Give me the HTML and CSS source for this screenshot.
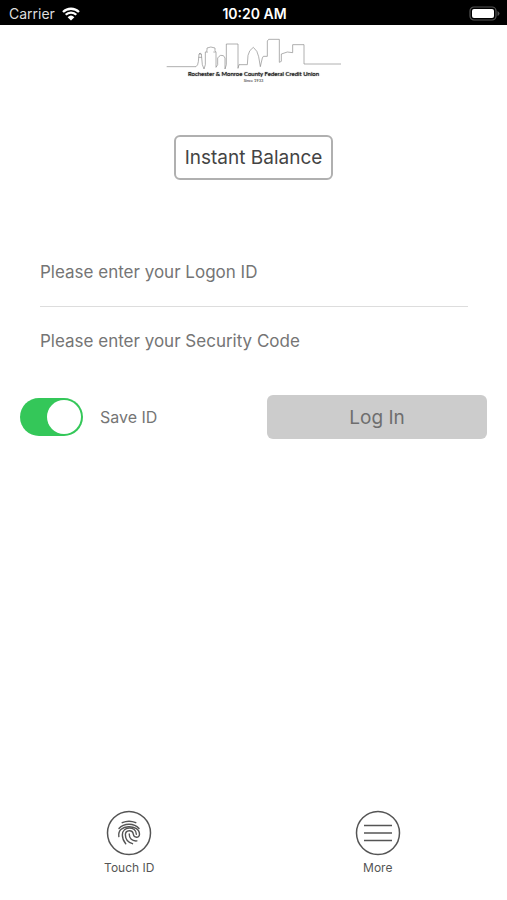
FILE: index.html
```html
<!DOCTYPE html>
<html lang="en">
<head>
<meta charset="utf-8">
<meta name="viewport" content="width=device-width, initial-scale=1">
<title>Log In</title>
<link rel="stylesheet" href="styles.css">
</head>
<body>
<div class="status">
  <div class="carrier">
    <span>Carrier</span>
    <svg class="wifi" viewBox="0 0 18 14" aria-hidden="true">
      <path d="M1 5A11.500 11.500 0 0 1 17 5M3.700 7.800A7.500 7.500 0 0 1 14.300 7.800" fill="none" stroke="#fff" stroke-width="2.300"/>
      <path d="M5.600 10.200A5 5 0 0 1 12.400 10.200L9 13.600Z" fill="#fff"/>
    </svg>
  </div>
  <span class="time">10:20 AM</span>
  <svg class="battery" viewBox="0 0 31 15" aria-hidden="true">
    <rect x="1" y="1" width="26" height="13" rx="4" fill="none" stroke="#555" stroke-width="1.200"/>
    <rect x="3" y="3" width="22" height="9" rx="2" fill="#fff"/>
    <path d="M28.500 5Q30.500 6 30.500 7.500T28.500 10Z" fill="#555"/>
  </svg>
</div>
<header class="brand">
  <svg class="skyline" viewBox="18 24 528 96" aria-hidden="true">
    <path d="M20 110H108Q114 106 115 95L117 72L120 69L124 72L127 104L132 117L136 104V66L141 62V54Q152 48 165 54V62L168 66V112L173 104V84Q176 79 182 76Q192 74 195 84V117L199 104V42H234V115L237 104H262L264 76Q267 60 280 52Q293 62 296 80L301 110L307 84L310 79H322V33L326 28H358V97L364 94V72L382 66L398 68V44H432V102H543"/>
    <path d="M117 72H124M116 82H125M138 66H144M160 66H167"/>
  </svg>
  <div class="brand-name">Rochester &amp; Monroe County Federal Credit Union</div>
  <div class="brand-since">Since 1933</div>
</header>
<main>
  <button class="balance" type="button">Instant Balance</button>
  <form>
    <div class="fields">
      <input class="field" type="text" aria-label="Logon ID" placeholder="Please enter your Logon ID">
      <input class="field" type="password" aria-label="Security Code" placeholder="Please enter your Security Code">
    </div>
    <div class="actions">
      <label class="save"><input class="switch" type="checkbox" checked>Save ID</label>
      <button class="login" type="submit" disabled>Log In</button>
    </div>
  </form>
</main>
<nav class="tabs">
  <a class="tab" href="#touch">
    <svg class="tab-icon" viewBox="0 0 46 46" aria-hidden="true">
      <circle cx="23" cy="23" r="21.500"/>
      <svg x="9" y="8.500" width="28" height="28" viewBox="0 0 24 24">
        <g class="print">
          <path d="M6.200 3.600Q12 1 17.800 3.600"/>
          <path d="M3.400 8.600Q6.500 4.900 12 4.900T20.600 8.600"/>
          <path d="M3.300 15.500C1.500 4.500 21 4.600 21 13.500C21 17 16.200 16.800 15.700 13.500C15.200 9.300 8.900 9.500 8.900 14C8.900 17.500 11.200 20.500 15 21.600"/>
          <path d="M9.200 21.600C7.200 19.300 6.300 17 6.300 14.200C6.300 6.300 18.300 6.300 18.300 13.500"/>
          <path d="M12.200 13.200C12.200 17.200 14.600 19.600 18.800 19.200"/>
        </g>
      </svg>
    </svg>
    <span>Touch ID</span>
  </a>
  <a class="tab" href="#more">
    <svg class="tab-icon" viewBox="0 0 46 46" aria-hidden="true">
      <circle cx="23" cy="23" r="21.500"/>
      <path d="M9 15.500H37M9 23H37M9 30.500H37"/>
    </svg>
    <span>More</span>
  </a>
</nav>
</body>
</html>
```
FILE: styles.css
```css
* { box-sizing: border-box; }
body {
  margin: 0;
  min-height: 100vh;
  display: flex;
  flex-direction: column;
  background: #fff;
  color: #444;
  font-family: Inter, "Liberation Sans", sans-serif;
}
button, input { font: inherit; }
.status {
  display: grid;
  grid-template-columns: 1fr auto 1fr;
  align-items: center;
  height: 25px;
  padding: 2px 7px 0 9px;
  background: #000;
  color: #fff;
  font-size: 14px;
}
.carrier { display: flex; align-items: center; gap: 7px; color: #ddd; }
.wifi { width: 18px; height: 14px; }
.time { font-weight: 600; }
.battery { width: 31px; height: 15px; justify-self: end; }
.brand {
  display: flex;
  flex-direction: column;
  align-items: center;
  padding-top: 13px;
  color: #111;
  font-family: Lato, "Liberation Sans", sans-serif;
}
.skyline { width: 176px; height: 32px; fill: none; stroke: #888; stroke-width: 2; }
.brand-name { font-size: 6px; line-height: 8px; text-shadow: 0 0 1px #111; }
.brand-since { font-size: 4px; line-height: 5px; }
main { flex: 1; display: flex; flex-direction: column; }
.balance {
  align-self: center;
  height: 45px;
  margin-top: 52px;
  padding: 0 9px;
  border: 2px solid #b0b0b0;
  border-radius: 6px;
  background: #fff;
  color: #444;
  font-size: 19px;
}
form { margin-top: 57px; }
.fields { padding: 0 39px 0 40px; }
.field {
  display: block;
  width: 100%;
  height: 69px;
  padding: 0;
  border: 0;
  border-radius: 0;
  background: transparent;
  color: #444;
  font-size: 17px;
}
.field + .field { border-top: 1px solid #ddd; }
.field::placeholder { color: #757575; opacity: 1; }
.actions {
  display: grid;
  grid-template-columns: 1fr 220px;
  align-items: center;
  margin-top: 20px;
  padding: 0 20px;
}
.save { display: flex; align-items: center; gap: 17px; color: #757575; font-size: 16px; }
.switch {
  appearance: none;
  width: 63px;
  height: 38px;
  margin: 0;
  padding: 2px;
  border-radius: 19px;
  background: #ddd;
}
.switch::before {
  content: "";
  display: block;
  width: 34px;
  height: 34px;
  border-radius: 50%;
  background: #fff;
}
.switch:checked { background: #34c759; }
.switch:checked::before { margin-left: auto; }
.login {
  height: 44px;
  border: 0;
  border-radius: 6px;
  background: #ccc;
  color: #6e6e6e;
  font-size: 19px;
}
.tabs { display: grid; grid-template-columns: 1fr 1fr; padding: 0 5px 24px; }
.tab {
  display: flex;
  flex-direction: column;
  align-items: center;
  gap: 4px;
  color: #555;
  font-size: 12px;
  line-height: 16px;
  text-decoration: none;
}
.tab-icon { width: 46px; height: 46px; fill: none; stroke: #555; stroke-width: 1.500; }
.print { stroke-width: 1.200; stroke-linecap: round; }
```
